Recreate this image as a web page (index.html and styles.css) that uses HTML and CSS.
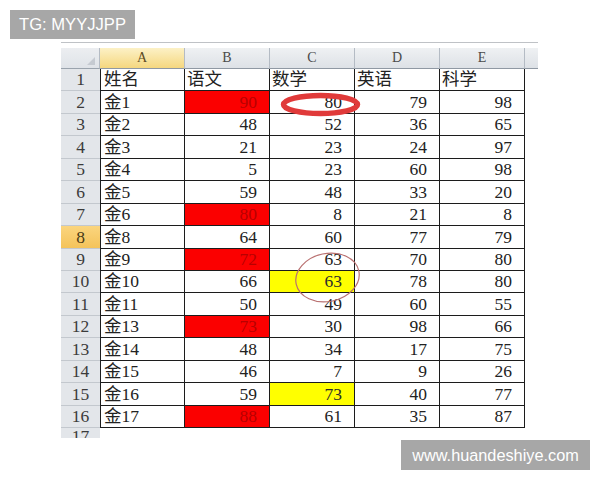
FILE: index.html
```html
<!DOCTYPE html>
<html lang="zh">
<head>
<meta charset="utf-8">
<title>Sheet</title>
<link rel="stylesheet" href="styles.css">
</head>
<body>
<div class="page">
  <div class="sheet">
    <div class="bar"></div>
    <div class="grid">
      <div class="corner"><span class="tri"></span></div>
      <div class="ch sel">A</div><div class="ch">B</div><div class="ch">C</div><div class="ch">D</div><div class="ch">E</div><div class="ch fill"></div>

      <div class="rh">1</div><div class="c a">姓名</div><div class="c t">语文</div><div class="c t">数学</div><div class="c t">英语</div><div class="c t">科学</div><div class="x"></div>
      <div class="rh">2</div><div class="c a">金1</div><div class="c red">90</div><div class="c">80</div><div class="c">79</div><div class="c">98</div><div class="x"></div>
      <div class="rh">3</div><div class="c a">金2</div><div class="c">48</div><div class="c">52</div><div class="c">36</div><div class="c">65</div><div class="x"></div>
      <div class="rh">4</div><div class="c a">金3</div><div class="c">21</div><div class="c">23</div><div class="c">24</div><div class="c">97</div><div class="x"></div>
      <div class="rh">5</div><div class="c a">金4</div><div class="c">5</div><div class="c">23</div><div class="c">60</div><div class="c">98</div><div class="x"></div>
      <div class="rh">6</div><div class="c a">金5</div><div class="c">59</div><div class="c">48</div><div class="c">33</div><div class="c">20</div><div class="x"></div>
      <div class="rh">7</div><div class="c a">金6</div><div class="c red">80</div><div class="c">8</div><div class="c">21</div><div class="c">8</div><div class="x"></div>
      <div class="rh on">8</div><div class="c a">金8</div><div class="c">64</div><div class="c">60</div><div class="c">77</div><div class="c">79</div><div class="x"></div>
      <div class="rh">9</div><div class="c a">金9</div><div class="c red">72</div><div class="c">63</div><div class="c">70</div><div class="c">80</div><div class="x"></div>
      <div class="rh">10</div><div class="c a">金10</div><div class="c">66</div><div class="c yel">63</div><div class="c">78</div><div class="c">80</div><div class="x"></div>
      <div class="rh">11</div><div class="c a">金11</div><div class="c">50</div><div class="c">49</div><div class="c">60</div><div class="c">55</div><div class="x"></div>
      <div class="rh">12</div><div class="c a">金13</div><div class="c red">73</div><div class="c">30</div><div class="c">98</div><div class="c">66</div><div class="x"></div>
      <div class="rh">13</div><div class="c a">金14</div><div class="c">48</div><div class="c">34</div><div class="c">17</div><div class="c">75</div><div class="x"></div>
      <div class="rh">14</div><div class="c a">金15</div><div class="c">46</div><div class="c">7</div><div class="c">9</div><div class="c">26</div><div class="x"></div>
      <div class="rh">15</div><div class="c a">金16</div><div class="c">59</div><div class="c yel">73</div><div class="c">40</div><div class="c">77</div><div class="x"></div>
      <div class="rh">16</div><div class="c a">金17</div><div class="c red">88</div><div class="c">61</div><div class="c">35</div><div class="c">87</div><div class="x"></div>

      <div class="rh cut">17</div><div class="e"></div><div class="e"></div><div class="e"></div><div class="e"></div><div class="e"></div><div class="e"></div>
    </div>
  </div>

  <svg class="marks" width="600" height="480" viewBox="0 0 600 480">
    <ellipse cx="320.5" cy="104.5" rx="37" ry="9" fill="none" stroke="#e03a3a" stroke-width="5.5"/>
    <ellipse cx="327.5" cy="277.5" rx="32" ry="24" fill="none" stroke="#b97070" stroke-width="1.2" transform="rotate(-12 327.5 277.5)"/>
  </svg>

  <div class="wm wm-tg">TG: MYYJJPP</div>
  <div class="wm wm-url">www.huandeshiye.com</div>
</div>
</body>
</html>
```

FILE: styles.css
```css
html, body {
  margin: 0;
  padding: 0;
  background: #fff;
}

.page {
  position: relative;
  width: 600px;
  height: 480px;
  overflow: hidden;
  box-sizing: border-box;
  padding: 42px 0 0 61px;
}

.bar {
  width: 477px;
  height: 1px;
  background: #bfc2c6;
  margin-bottom: 5px;
}

.grid {
  display: grid;
  grid-template-columns: 39px repeat(5, 85px) 13px;
  grid-template-rows: 21px repeat(16, 22.44px) 10px;
  overflow: hidden;
  font-family: "Liberation Serif", "Noto Sans CJK SC", serif;
  font-size: 17.5px;
  color: #222;
}

.grid > div {
  box-sizing: border-box;
  overflow: hidden;
}

.corner {
  position: relative;
  background: linear-gradient(#eceef1, #dfe3e8);
  border-right: 1px solid #b4bbc4;
  border-bottom: 1px solid #9aa3ad;
}

.tri {
  position: absolute;
  right: 4px;
  bottom: 3px;
  width: 0;
  height: 0;
  border-left: 8px solid transparent;
  border-bottom: 8px solid #c5cad1;
}

.ch {
  display: flex;
  align-items: center;
  justify-content: center;
  background: linear-gradient(#eff1f3, #dde1e6);
  border-right: 1px solid #b4bbc4;
  border-bottom: 1px solid #8f98a3;
  font-family: "Liberation Serif", serif;
  font-size: 14px;
  color: #4a4a4a;
}

.ch.sel {
  background: linear-gradient(#fcf1c6, #f5d77f);
  color: #5c4b24;
}

.ch.fill {
  border-right: none;
}

.rh {
  display: flex;
  align-items: flex-end;
  justify-content: center;
  padding-bottom: 1px;
  line-height: 20px;
  background: #e3e6ea;
  border-bottom: 1px solid #c3c8ce;
  color: #3b3b3b;
}

.rh.on {
  background: linear-gradient(#fbd57e, #f4c35a);
  color: #4a3b17;
}

.rh.cut {
  align-items: flex-start;
  padding: 0;
  line-height: 16px;
  border-bottom: none;
}

.c {
  display: flex;
  align-items: flex-end;
  justify-content: flex-end;
  padding: 0 12px 1px 0;
  line-height: 20px;
  background: #fff;
  border-right: 1px solid #1c1c1c;
  border-bottom: 1px solid #1c1c1c;
}

.c.a {
  justify-content: flex-start;
  padding-left: 3px;
  border-left: 1px solid #1c1c1c;
}

.c.t {
  justify-content: flex-start;
  padding-left: 2px;
}

.c.red {
  background: #fb0000;
  color: #b80000;
}

.c.yel {
  background: #ffff00;
  color: #2c2c2c;
}

.x, .e {
  background: #fff;
}

.marks {
  position: absolute;
  left: 0;
  top: 0;
  pointer-events: none;
}

.wm {
  position: absolute;
  background: #a7a7a7;
  color: #fff;
  font-family: "Liberation Sans", Arial, sans-serif;
  display: flex;
  align-items: center;
  justify-content: center;
}

.wm-tg {
  left: 10px;
  top: 10px;
  width: 125px;
  height: 29px;
  font-size: 16.6px;
}

.wm-url {
  left: 401px;
  top: 440px;
  width: 189px;
  height: 30px;
  font-size: 16.3px;
}
```
